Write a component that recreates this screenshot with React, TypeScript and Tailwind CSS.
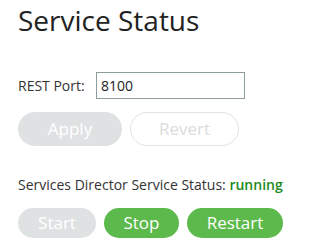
import { useState } from "react";

export default function App() {
  const [port, setPort] = useState("8100");

  return (
    <div className="min-h-[250px] w-[309px] bg-white pl-[18px] pt-[3px] font-['Open_Sans',sans-serif] text-[#333]">
      <h1 className="text-[28px] leading-[34px] font-normal text-[#222]">
        Service Status
      </h1>

      {/* Port */}
      <div className="mt-[35px] flex items-center">
        <label className="w-[78px] text-[14px] leading-5">REST Port:</label>
        <input
          type="text"
          value={port}
          onChange={(e) => setPort(e.target.value)}
          className="h-[27px] w-[149px] border border-[#8e9c9c] px-[4px] text-[14px] text-[#222] outline-none"
        />
      </div>
      <div className="mt-[13px] flex gap-2">
        <button
          type="button"
          disabled
          className="h-[34px] w-[104px] rounded-full bg-[#dfe2e3] text-[17px] text-white"
        >
          Apply
        </button>
        <button
          type="button"
          disabled
          className="h-[34px] w-[109px] rounded-full border border-[#e2e2e2] bg-white text-[17px] text-[#dcdcdc]"
        >
          Revert
        </button>
      </div>

      {/* Status */}
      <p className="mt-[29px] text-[14px] leading-5">
        Services Director Service Status:{" "}
        <span className="font-semibold text-[#1c8a1c]">running</span>
      </p>
      <div className="mt-[13px] flex gap-2">
        <button
          type="button"
          disabled
          className="h-[30px] w-[78px] rounded-full bg-[#dfe2e3] text-[17px] text-white"
        >
          Start
        </button>
        <button
          type="button"
          className="h-[30px] w-[75px] rounded-full bg-[#5cb94b] text-[17px] text-white"
        >
          Stop
        </button>
        <button
          type="button"
          className="h-[30px] w-[96px] rounded-full bg-[#5cb94b] text-[17px] text-white"
        >
          Restart
        </button>
      </div>
    </div>
  );
}
